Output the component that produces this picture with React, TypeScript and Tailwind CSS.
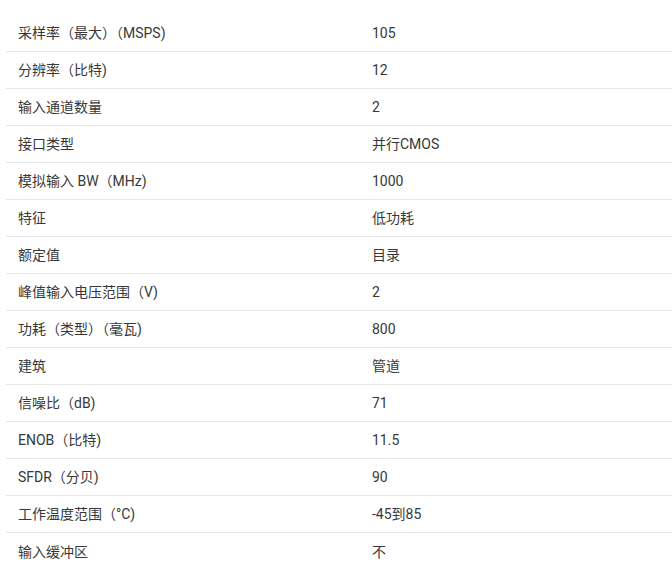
import React from "react";

const rows: [string, string][] = [
  ["采样率（最大）（MSPS)", "105"],
  ["分辨率（比特)", "12"],
  ["输入通道数量", "2"],
  ["接口类型", "并行CMOS"],
  ["模拟输入 BW（MHz)", "1000"],
  ["特征", "低功耗"],
  ["额定值", "目录"],
  ["峰值输入电压范围（V)", "2"],
  ["功耗（类型）（毫瓦)", "800"],
  ["建筑", "管道"],
  ["信噪比（dB)", "71"],
  ["ENOB（比特)", "11.5"],
  ["SFDR（分贝)", "90"],
  ["工作温度范围（°C)", "-45到85"],
  ["输入缓冲区", "不"],
];

export default function App() {
  return (
    <div
      className="w-[672px] h-[568px] overflow-hidden bg-white pt-[15px] pl-[6px] text-[14px] text-[#383838]"
      style={{ fontFamily: 'Roboto, "Noto Sans CJK SC", sans-serif' }}
    >
      {rows.map(([k, v], i) => (
        <div
          key={i}
          className={`grid grid-cols-[354px_1fr] h-[37px] items-center ${
            i < rows.length - 1 ? "border-b border-[#e6e6e6]" : ""
          }`}
        >
          <div className="px-3 leading-none">{k}</div>
          <div className="px-3 leading-none">{v}</div>
        </div>
      ))}
    </div>
  );
}
